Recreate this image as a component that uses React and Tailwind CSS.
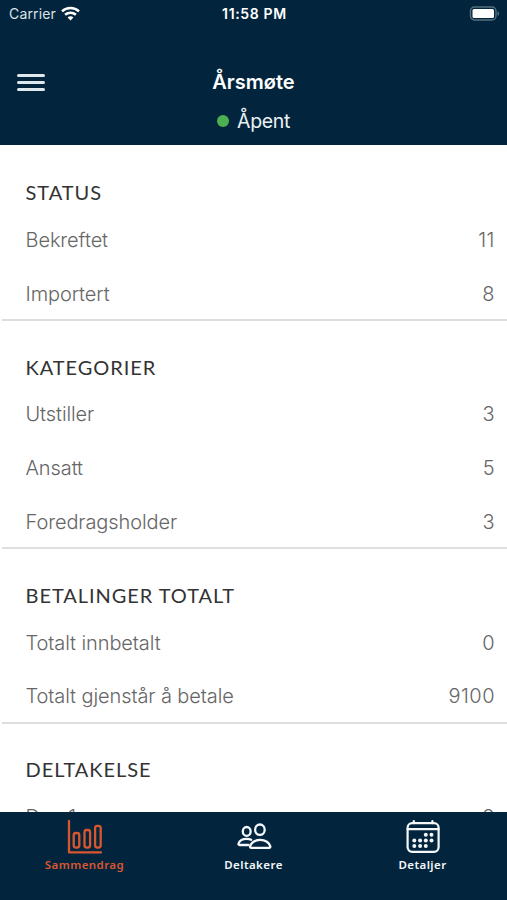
const sections = [
  { title: 'STATUS', rows: [['Bekreftet', '11'], ['Importert', '8']] },
  { title: 'KATEGORIER', rows: [['Utstiller', '3'], ['Ansatt', '5'], ['Foredragsholder', '3']] },
  { title: 'BETALINGER TOTALT', rows: [['Totalt innbetalt', '0'], ['Totalt gjenstår å betale', '9100']] },
  { title: 'DELTAKELSE', rows: [['Dag 1', '8']] },
];

function WifiIcon() {
  return (
    <svg className="h-[15px] w-[19px]" viewBox="0 0 19 15" fill="none" stroke="#fff" strokeWidth="2.5">
      <path d="M1 5.3C5.8.8 13.2.8 18 5.3" />
      <path d="M4.1 8.8c3.1-2.8 7.7-2.8 10.8 0" />
      <path d="M6.6 11.4c1.6-1.5 4.2-1.5 5.8 0L9.5 14.4z" fill="#fff" stroke="none" />
    </svg>
  );
}

function BatteryIcon() {
  return (
    <svg className="h-[15px] w-[31px]" viewBox="0 0 31 15">
      <rect x="1.5" y="1" width="25.5" height="13" rx="4" fill="none" stroke="#56707f" strokeWidth="1.4" />
      <rect x="3.5" y="3" width="21.5" height="9" rx="1.5" fill="#fff" />
      <path d="M28.5 5.2c2.2.7 2.2 3.9 0 4.6z" fill="#56707f" />
    </svg>
  );
}

function ChartIcon() {
  return (
    <svg className="h-9 w-9" viewBox="0 0 36 36" fill="none" stroke="currentColor" strokeWidth="2.3" strokeLinecap="round" strokeLinejoin="round">
      <path d="M2 2v31.3h32" />
      <rect x="6.7" y="14" width="5.6" height="14.6" rx="2.3" />
      <rect x="17.5" y="11" width="5.6" height="17.6" rx="2.3" />
      <rect x="28.1" y="6.8" width="5.6" height="21.8" rx="2.3" />
    </svg>
  );
}

function PeopleIcon() {
  return (
    <svg className="h-9 w-9" viewBox="0 0 36 36" fill="none" stroke="currentColor" strokeWidth="2.3" strokeLinecap="round" strokeLinejoin="round">
      <ellipse cx="23.9" cy="10.7" rx="4.8" ry="5.2" />
      <ellipse cx="10.7" cy="12.4" rx="3.9" ry="4.4" />
      <path d="M24.2 20.9c-5.2 0-9.2 2.9-10.1 6.5-.2.9.4 1.5 1.2 1.5h17.8c.8 0 1.4-.6 1.2-1.5-.9-3.6-4.9-6.5-10.1-6.5z" />
      <path d="M15.2 20.7c-1.2-.6-2.8-.9-4.5-.9-4.1 0-7.4 2-8.2 4.9-.2.8.2 1.3 1 1.3h9" />
    </svg>
  );
}

function CalendarIcon() {
  const dots = [[20.8, 15.8], [26.5, 15.8], [9.3, 21.4], [15.1, 21.4], [20.8, 21.4], [26.5, 21.4], [9.3, 27.1], [15.1, 27.1], [20.8, 27.1]];
  return (
    <svg className="h-9 w-9" viewBox="0 0 36 36" fill="none" stroke="currentColor" strokeWidth="2.2" strokeLinecap="round" strokeLinejoin="round">
      <rect x="2.6" y="4.2" width="31" height="28.6" rx="4.5" />
      <path d="M8.8 2v2.2M27.4 2v2.2M2.6 10.2h31" />
      {dots.map(([x, y]) => (
        <circle key={x + '-' + y} cx={x} cy={y} r="2" fill="currentColor" stroke="none" />
      ))}
    </svg>
  );
}

function Section({ title, rows }) {
  return (
    <section className="ml-[2px] shrink-0 border-b-2 border-[#dedede] pl-[23.5px] pr-[12px]">
      <h2 className="flex h-[66.5px] items-end pb-[9px] font-['Lato',sans-serif] text-[20px] leading-[24px] tracking-[0.95px] text-[#333]">{title}</h2>
      <div className="-mb-[1.5px]">
        {rows.map(([label, value]) => (
          <div key={label} className="flex h-[53.75px] items-center justify-between text-[20px] font-[330] text-[#666]">
            <span className="tracking-[-0.1px]">{label}</span>
            <span className="tracking-[0.5px]">{value}</span>
          </div>
        ))}
      </div>
    </section>
  );
}

function Tab({ icon, label, active }) {
  return (
    <div className={active ? 'flex flex-1 flex-col items-center text-[#d9572f]' : 'flex flex-1 flex-col items-center text-[#f4f8fa]'}>
      {icon}
      <span className="mt-[2px] font-['Noto_Sans',sans-serif] text-[11.5px] font-semibold leading-[16px] tracking-[0.42px]">{label}</span>
    </div>
  );
}

export default function App() {
  return (
    <div className="flex h-[900px] w-[507px] flex-col overflow-hidden bg-white font-['Inter',sans-serif]">
      <header className="flex h-[145px] shrink-0 flex-col bg-[#02253d] text-white">
        <div className="grid h-[26px] grid-cols-3 items-center pl-[9px] pr-[7px] text-[14px]">
          <div className="flex items-center gap-[5px]">
            <span className="tracking-[0.15px] text-[#dbe3e8]">Carrier</span>
            <WifiIcon />
          </div>
          <span className="text-center font-semibold tracking-[0.65px]">11:58 PM</span>
          <div className="flex justify-end"><BatteryIcon /></div>
        </div>
        <div className="mt-[40px] grid h-[32px] grid-cols-3 items-center px-[17px]">
          <div className="flex w-[28px] flex-col gap-[4px]">
            <span className="h-[3px] rounded-full bg-[#dfe8ec]" />
            <span className="h-[3px] rounded-full bg-[#dfe8ec]" />
            <span className="h-[3px] rounded-full bg-[#dfe8ec]" />
          </div>
          <h1 className="text-center text-[20px] font-semibold">Årsmøte</h1>
        </div>
        <div className="mt-[8px] flex h-[30px] items-center justify-center gap-[8px] text-[19.5px] text-[#eaf1f4]">
          <span className="h-[12px] w-[12px] rounded-full bg-[#4caf50]" />
          <span className="pt-[2px] tracking-[-0.35px]">Åpent</span>
        </div>
      </header>
      <main className="flex min-h-0 flex-1 flex-col overflow-hidden pt-[1.5px]">
        {sections.map((s) => (
          <Section key={s.title} title={s.title} rows={s.rows} />
        ))}
      </main>
      <nav className="flex h-[88px] shrink-0 bg-[#02253d] pt-[7px]">
        <Tab icon={<ChartIcon />} label="Sammendrag" active />
        <Tab icon={<PeopleIcon />} label="Deltakere" />
        <Tab icon={<CalendarIcon />} label="Detaljer" />
      </nav>
    </div>
  );
}
